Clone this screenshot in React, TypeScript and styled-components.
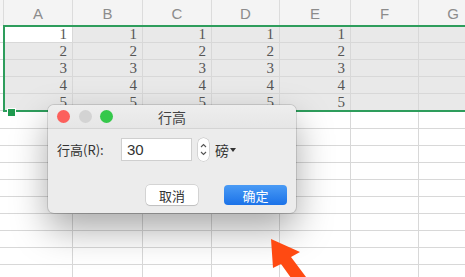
import { Fragment } from 'react';
import styled, { createGlobalStyle } from 'styled-components';

const GlobalStyle = createGlobalStyle`
  html, body {
    margin: 0;
    padding: 0;
    background: #ffffff;
    overflow: hidden;
  }
  body {
    font-family: 'Liberation Sans', 'Noto Sans CJK SC', sans-serif;
  }
`;

const Page = styled.div`
  position: relative;
  width: 465px;
  height: 277px;
  overflow: hidden;
  background: #fff;
`;

const Sheet = styled.div`
  display: grid;
  grid-template-columns: 4px 69px 70px 69px 68px 71px 68px 69px;
  grid-template-rows: 26px;
  grid-auto-rows: 17.1px;
`;

const HeadCell = styled.div`
  display: flex;
  align-items: center;
  justify-content: center;
  background: #f4f4f4;
  border-right: 1px solid #dcdcdc;
  color: #8c8c8c;
  font-size: 15px;
`;

const Cell = styled.div<{ $shade: boolean }>`
  box-sizing: border-box;
  display: flex;
  align-items: center;
  justify-content: flex-end;
  padding-right: 5px;
  background: ${(p) => (p.$shade ? '#e9e9e9' : '#ffffff')};
  border-right: 1px solid #d8d8d8;
  border-bottom: 1px solid #d8d8d8;
  color: #555555;
  font-family: 'Liberation Serif', serif;
  font-size: 15px;
`;

const Selection = styled.div`
  position: absolute;
  left: 3px;
  top: 25px;
  width: 480px;
  height: 87px;
  border: 2px solid #2e9d5c;
  box-sizing: border-box;
  pointer-events: none;
`;

const Handle = styled.div`
  position: absolute;
  left: 7px;
  top: 108px;
  width: 7px;
  height: 7px;
  background: #1f9a4f;
  border: 1px solid #fff;
`;

const Dialog = styled.div`
  position: absolute;
  left: 48px;
  top: 105px;
  width: 248px;
  height: 108px;
  display: flex;
  flex-direction: column;
  background: #ececec;
  border-radius: 6px;
  box-shadow: 0 16px 36px rgba(0, 0, 0, 0.34), 0 0 0 1px rgba(0, 0, 0, 0.12);
  overflow: hidden;
  font-family: 'Noto Sans CJK SC', 'Liberation Sans', sans-serif;
`;

const TitleBar = styled.div`
  position: relative;
  height: 23px;
  display: flex;
  align-items: center;
  justify-content: center;
  background: linear-gradient(#eeeeee, #e6e6e6);
  border-bottom: 1px solid #d4d4d4;
  color: #444444;
  font-size: 14px;
`;

const Lights = styled.div`
  position: absolute;
  left: 9px;
  top: 5px;
  display: flex;
  gap: 8.5px;
`;

const Light = styled.span<{ $color: string }>`
  width: 13px;
  height: 13px;
  border-radius: 50%;
  background: ${(p) => p.$color};
`;

const Body = styled.div`
  flex: 1;
  display: flex;
  flex-direction: column;
  justify-content: space-between;
  padding: 9px 9px 8px 9px;
`;

const FieldRow = styled.div`
  display: flex;
  align-items: center;
  color: #333;
  font-size: 13px;
`;

const Label = styled.span`
  width: 64px;
`;

const Input = styled.div`
  box-sizing: border-box;
  width: 71px;
  height: 23px;
  display: flex;
  align-items: center;
  padding-left: 5px;
  background: #fff;
  border: 1px solid #cfcfcf;
  font-family: 'Liberation Sans', sans-serif;
  font-size: 15px;
  color: #333;
`;

const Stepper = styled.div`
  box-sizing: border-box;
  width: 11px;
  height: 23px;
  margin-left: 6px;
  display: flex;
  flex-direction: column;
  align-items: center;
  justify-content: space-around;
  padding: 3px 0;
  background: #fff;
  border-radius: 6px;
  box-shadow: 0 0 0 0.5px rgba(0, 0, 0, 0.2);
`;

const Unit = styled.span`
  display: flex;
  align-items: center;
  gap: 1px;
  margin-left: 6px;
  font-size: 14px;
  color: #333;
`;

const Buttons = styled.div`
  display: flex;
  justify-content: flex-end;
  gap: 26px;
`;

const Button = styled.div<{ $primary?: boolean }>`
  box-sizing: border-box;
  width: ${(p) => (p.$primary ? 63 : 52)}px;
  height: 20px;
  display: flex;
  align-items: center;
  justify-content: center;
  border-radius: 4px;
  font-size: 13px;
  color: ${(p) => (p.$primary ? '#ffffff' : '#333333')};
  background: ${(p) => (p.$primary ? 'linear-gradient(#4a9bf5, #1b72e8)' : '#ffffff')};
  box-shadow: ${(p) => (p.$primary ? 'none' : '0 0 0 0.5px rgba(0,0,0,0.2), 0 1px 1px rgba(0,0,0,0.1)')};
`;

const Overlay = styled.svg`
  position: absolute;
  left: 0;
  top: 0;
  pointer-events: none;
`;

const columns = ['A', 'B', 'C', 'D', 'E', 'F', 'G'];
const rows = Array.from({ length: 15 }, (_, i) => i);

function App() {
  return (
    <Page>
      <GlobalStyle />
      <Sheet>
        <HeadCell />
        {columns.map((c) => (
          <HeadCell key={c}>{c}</HeadCell>
        ))}
        {rows.map((r) => (
          <Fragment key={r}>
            <Cell $shade={false} />
            {columns.map((c, ci) => (
              <Cell key={c} $shade={r < 5 && !(r === 0 && ci === 0)}>
                {r < 5 && ci < 5 ? r + 1 : ''}
              </Cell>
            ))}
          </Fragment>
        ))}
      </Sheet>
      <Selection />
      <Handle />
      <Dialog>
        <TitleBar>
          <Lights>
            <Light $color="#fc605c" />
            <Light $color="#d3d3d3" />
            <Light $color="#35c84b" />
          </Lights>
          行高
        </TitleBar>
        <Body>
          <FieldRow>
            <Label>行高(R):</Label>
            <Input>30</Input>
            <Stepper>
              <svg width="7" height="5" viewBox="0 0 7 5">
                <path d="M1 4 L3.5 1.5 L6 4" fill="none" stroke="#555" strokeWidth="1.1" />
              </svg>
              <svg width="7" height="5" viewBox="0 0 7 5">
                <path d="M1 1 L3.5 3.5 L6 1" fill="none" stroke="#555" strokeWidth="1.1" />
              </svg>
            </Stepper>
            <Unit>
              磅
              <svg width="6" height="4" viewBox="0 0 6 4">
                <path d="M0 0 H6 L3 4 Z" fill="#333" />
              </svg>
            </Unit>
          </FieldRow>
          <Buttons>
            <Button>取消</Button>
            <Button $primary>确定</Button>
          </Buttons>
        </Body>
      </Dialog>
      <Overlay width="465" height="277" viewBox="0 0 465 277">
        <polygon
          points="271,239 300,252 291,257 309,281 299,289 281,264 273,268"
          fill="#ff4a12"
        />
      </Overlay>
    </Page>
  );
}

export default App;
